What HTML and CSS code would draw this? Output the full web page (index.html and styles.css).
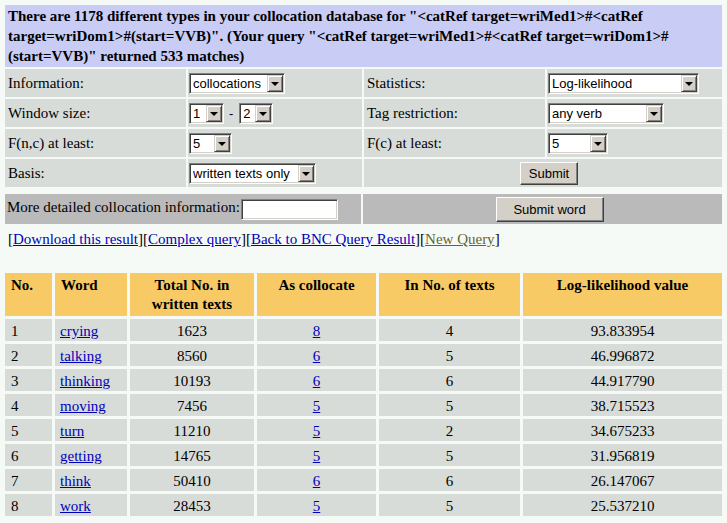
FILE: index.html
```html
<!DOCTYPE html>
<html lang="en">
    <head>
        <meta charset="UTF-8" />
        <title>Collocation Results</title>
        <link rel="stylesheet" href="styles.css">
    </head>
    <body>
        <form class="query-form">
            <table class="query">
                <colgroup>
                    <col class="c-label" />
                    <col class="c-field" />
                    <col class="c-label" />
                    <col class="c-field2" />
                </colgroup>
                <tr>
                    <td class="summary" colspan="4">
                        There are 1178 different types in your collocation database for "&lt;catRef target=wriMed1&gt;#&lt;catRef target=wriDom1&gt;#(start=VVB)". (Your query "&lt;catRef target=wriMed1&gt;#&lt;catRef target=wriDom1&gt;#(start=VVB)" returned 533 matches)
                    </td>
                </tr>
                <tr>
                    <td class="lbl">Information:</td>
                    <td class="fld">
                        <span class="dd w-info">
                            <select><option>collocations</option></select>
                            <span class="dd-btn"></span>
                        </span>
                    </td>
                    <td class="lbl">Statistics:</td>
                    <td class="fld">
                        <span class="dd w-stats">
                            <select><option>Log-likelihood</option></select>
                            <span class="dd-btn"></span>
                        </span>
                    </td>
                </tr>
                <tr>
                    <td class="lbl">Window size:</td>
                    <td class="fld">
                        <span class="dd w-win1">
                            <select><option>1</option></select>
                            <span class="dd-btn"></span>
                        </span><span class="dash">-</span><span class="dd w-win2">
                            <select><option>2</option></select>
                            <span class="dd-btn"></span>
                        </span>
                    </td>
                    <td class="lbl">Tag restriction:</td>
                    <td class="fld">
                        <span class="dd w-tag">
                            <select><option>any verb</option></select>
                            <span class="dd-btn"></span>
                        </span>
                    </td>
                </tr>
                <tr>
                    <td class="lbl">F(n,c) at least:</td>
                    <td class="fld">
                        <span class="dd w-fnc">
                            <select><option>5</option></select>
                            <span class="dd-btn"></span>
                        </span>
                    </td>
                    <td class="lbl">F(c) at least:</td>
                    <td class="fld">
                        <span class="dd w-fc">
                            <select><option>5</option></select>
                            <span class="dd-btn"></span>
                        </span>
                    </td>
                </tr>
                <tr>
                    <td class="lbl">Basis:</td>
                    <td class="fld">
                        <span class="dd w-basis">
                            <select><option>written texts only</option></select>
                            <span class="dd-btn"></span>
                        </span>
                    </td>
                    <td class="fld center" colspan="2">
                        <button type="button" class="btn btn-submit">Submit</button>
                    </td>
                </tr>
            </table>

            <table class="detail">
                <tr>
                    <td class="detail-left">
                        More detailed collocation information:<input type="text" class="word-input" />
                    </td>
                    <td class="detail-right">
                        <button type="button" class="btn btn-word">Submit word</button>
                    </td>
                </tr>
            </table>
        </form>

        <div class="links">
            [<a href="#">Download this result</a>][<a href="#">Complex query</a>][<a href="#">Back to BNC Query Result</a>][<a href="#" class="visited">New Query</a>]
        </div>

        <table class="results">
            <colgroup>
                <col class="r-no" />
                <col class="r-word" />
                <col class="r-total" />
                <col class="r-coll" />
                <col class="r-texts" />
                <col class="r-ll" />
            </colgroup>
            <tr>
                <th class="left">No.</th>
                <th class="left">Word</th>
                <th>Total No. in<br />written texts</th>
                <th>As collocate</th>
                <th>In No. of texts</th>
                <th>Log-likelihood value</th>
            </tr>
            <tr>
                <td>1</td>
                <td><a href="#">crying</a></td>
                <td class="center">1623</td>
                <td class="center"><a href="#">8</a></td>
                <td class="center">4</td>
                <td class="center">93.833954</td>
            </tr>
            <tr>
                <td>2</td>
                <td><a href="#">talking</a></td>
                <td class="center">8560</td>
                <td class="center"><a href="#">6</a></td>
                <td class="center">5</td>
                <td class="center">46.996872</td>
            </tr>
            <tr>
                <td>3</td>
                <td><a href="#">thinking</a></td>
                <td class="center">10193</td>
                <td class="center"><a href="#">6</a></td>
                <td class="center">6</td>
                <td class="center">44.917790</td>
            </tr>
            <tr>
                <td>4</td>
                <td><a href="#">moving</a></td>
                <td class="center">7456</td>
                <td class="center"><a href="#">5</a></td>
                <td class="center">5</td>
                <td class="center">38.715523</td>
            </tr>
            <tr>
                <td>5</td>
                <td><a href="#">turn</a></td>
                <td class="center">11210</td>
                <td class="center"><a href="#">5</a></td>
                <td class="center">2</td>
                <td class="center">34.675233</td>
            </tr>
            <tr>
                <td>6</td>
                <td><a href="#">getting</a></td>
                <td class="center">14765</td>
                <td class="center"><a href="#">5</a></td>
                <td class="center">5</td>
                <td class="center">31.956819</td>
            </tr>
            <tr>
                <td>7</td>
                <td><a href="#">think</a></td>
                <td class="center">50410</td>
                <td class="center"><a href="#">6</a></td>
                <td class="center">6</td>
                <td class="center">26.147067</td>
            </tr>
            <tr>
                <td>8</td>
                <td><a href="#">work</a></td>
                <td class="center">28453</td>
                <td class="center"><a href="#">5</a></td>
                <td class="center">5</td>
                <td class="center">25.537210</td>
            </tr>
        </table>
    </body>
</html>
```

FILE: styles.css
```css
body {
    margin: 3px;
    background: #f6faf6;
    color: #000;
    font-family: "Liberation Serif", "Times New Roman", serif;
    font-size: 15px;
    line-height: 19px;
}

a {
    color: #0000bb;
}

a.visited {
    color: #666633;
}

.query-form {
    margin: 0;
}

/* query form */

.query {
    width: 721px;
    table-layout: fixed;
    border-collapse: separate;
    border-spacing: 2px;
    margin: 0;
}

.c-label {
    width: 181px;
}

.c-field {
    width: 174px;
}

.c-field2 {
    width: 175px;
}

.query td {
    padding: 0 3px;
    height: 28px;
    background: #d8dcd8;
    vertical-align: middle;
}

.query td.summary {
    background: #c9ccf5;
    font-weight: bold;
    line-height: 20px;
    height: auto;
    padding: 1px 3px;
}

.query td.fld {
    padding: 0 1px;
}

.center {
    text-align: center;
}

.dash {
    display: inline-block;
    vertical-align: middle;
    margin: 0 6px 0 5px;
    font-family: "Liberation Sans", Arial, sans-serif;
    font-size: 13px;
}

.dd {
    display: inline-flex;
    vertical-align: middle;
    height: 21px;
    box-sizing: border-box;
    background: #fff;
    border-top: 1px solid #808080;
    border-left: 1px solid #808080;
    border-right: 1px solid #fff;
    border-bottom: 1px solid #fff;
    box-shadow: inset 1px 1px 0 #404040, inset -1px -1px 0 #d4d0c8;
    padding: 1px;
}

.dd select {
    appearance: none;
    -webkit-appearance: none;
    flex: 1;
    min-width: 0;
    border: none;
    outline: none;
    background: #fff;
    font-family: "Liberation Sans", Arial, sans-serif;
    font-size: 13px;
    color: #000;
    padding: 0 2px;
    margin: 0;
    height: 17px;
}

.dd-btn {
    display: flex;
    align-items: center;
    justify-content: center;
    width: 16px;
    height: 17px;
    box-sizing: border-box;
    background: #d4d0c8;
    border-top: 1px solid #d4d0c8;
    border-left: 1px solid #d4d0c8;
    border-right: 1px solid #404040;
    border-bottom: 1px solid #404040;
    box-shadow: inset 1px 1px 0 #fff, inset -1px -1px 0 #808080;
}

.dd-btn::before {
    content: "";
    border-left: 4px solid transparent;
    border-right: 4px solid transparent;
    border-top: 4px solid #000;
    margin-top: 1px;
}

.w-info {
    width: 96px;
}

.w-win1 {
    width: 35px;
}

.w-win2 {
    width: 34px;
}

.w-fnc {
    width: 43px;
}

.w-basis {
    width: 127px;
}

.w-stats {
    width: 151px;
}

.w-tag {
    width: 116px;
}

.w-fc {
    width: 60px;
}

.btn {
    font-family: "Liberation Sans", Arial, sans-serif;
    font-size: 13px;
    color: #000;
    background: #d4d0c8;
    box-sizing: border-box;
    border-top: 1px solid #fff;
    border-left: 1px solid #fff;
    border-right: 1px solid #404040;
    border-bottom: 1px solid #404040;
    box-shadow: inset -1px -1px 0 #808080;
    padding: 0;
    margin: 0;
    vertical-align: middle;
}

.btn-submit {
    width: 58px;
    height: 23px;
    margin-left: 12px;
}

/* detailed collocation row */

.detail {
    width: 721px;
    table-layout: fixed;
    border-collapse: separate;
    border-spacing: 2px;
    margin-top: 3px;
}

.detail td {
    height: 30px;
    padding: 0 2px;
    background: #bababa;
    vertical-align: middle;
}

.detail-left {
    width: 352px;
}

.detail-right {
    text-align: center;
}

.word-input {
    width: 97px;
    height: 21px;
    box-sizing: border-box;
    vertical-align: middle;
    margin-left: 1px;
    border-top: 1px solid #808080;
    border-left: 1px solid #808080;
    border-right: 1px solid #fff;
    border-bottom: 1px solid #fff;
    box-shadow: inset 1px 1px 0 #404040, inset -1px -1px 0 #d4d0c8;
    background: #fff;
    padding: 0 3px;
    outline: none;
}

.btn-word {
    width: 108px;
    height: 25px;
    margin-left: 14px;
}

.links {
    margin-top: 4px;
    padding-left: 5px;
}

/* results */

.results {
    border-collapse: separate;
    border-spacing: 3px;
    table-layout: fixed;
    width: 723px;
    margin: 21px -1px 0;
}

.r-no {
    width: 47px;
}

.r-word {
    width: 72px;
}

.r-total {
    width: 124px;
}

.r-coll {
    width: 119px;
}

.r-texts {
    width: 141px;
}

.r-ll {
    width: 199px;
}

.results th {
    background: #f8ca66;
    font-weight: bold;
    vertical-align: top;
    text-align: center;
    height: 43px;
    box-sizing: border-box;
    padding: 3px 6px 2px;
}

.results th.left {
    text-align: left;
}

.results td {
    background: #d8dcd8;
    height: 22px;
    box-sizing: border-box;
    padding: 3px 6px 0 6px;
    line-height: 19px;
    vertical-align: top;
}

.results td:nth-child(2) {
    padding-left: 5px;
}
```
